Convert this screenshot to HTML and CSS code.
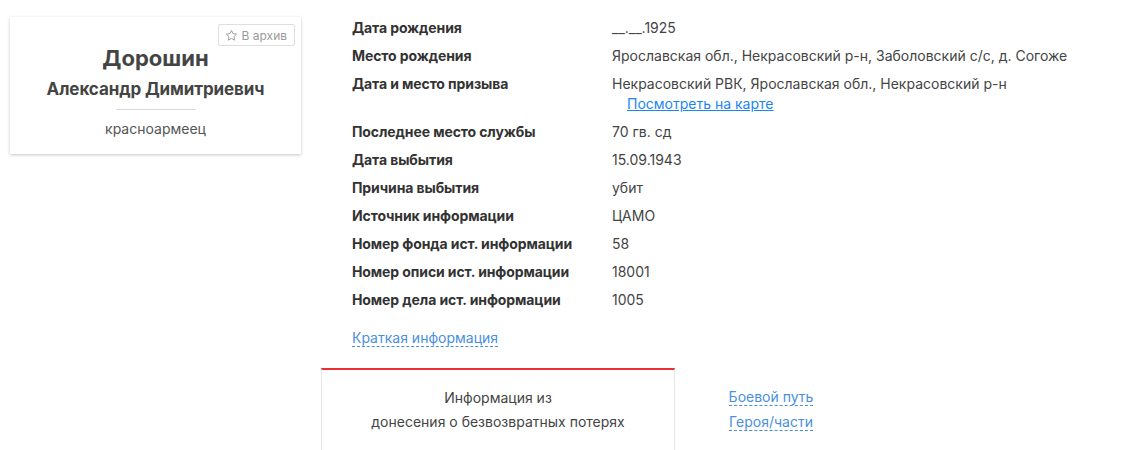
FILE: index.html
```html
<!DOCTYPE html>
<html lang="ru">
<head>
    <meta charset="UTF-8">
    <meta name="viewport" content="width=device-width, initial-scale=1.0">
    <title>Дорошин Александр Димитриевич</title>
    <link rel="stylesheet" href="styles.css">
</head>
<body>
    <div class="page">
        <!-- Person card -->
        <div class="hero-card">
            <button class="archive-btn">
                <svg class="star" width="13" height="13" viewBox="0 0 24 24">
                    <path d="M12 2.5l2.9 6.1 6.6.8-4.9 4.6 1.3 6.6L12 17.3l-5.9 3.3 1.3-6.6-4.9-4.6 6.6-.8z" fill="none" stroke="#9a9a9a" stroke-width="1.7" stroke-linejoin="round"/>
                </svg>
                В архив
            </button>
            <div class="hero-surname">Дорошин</div>
            <div class="hero-name">Александр Димитриевич</div>
            <div class="hero-divider"></div>
            <div class="hero-rank">красноармеец</div>
        </div>

        <!-- Details -->
        <div class="details">
            <div class="info-table">
                <div class="info-row">
                    <div class="info-label">Дата рождения</div>
                    <div class="info-value">__.__.1925</div>
                </div>
                <div class="info-row">
                    <div class="info-label">Место рождения</div>
                    <div class="info-value">Ярославская обл., Некрасовский р-н, Заболовский с/с, д. Согоже</div>
                </div>
                <div class="info-row">
                    <div class="info-label">Дата и место призыва</div>
                    <div class="info-value">
                        Некрасовский РВК, Ярославская обл., Некрасовский р-н
                        <a href="#" class="map-link">Посмотреть на карте</a>
                    </div>
                </div>
                <div class="info-row">
                    <div class="info-label">Последнее место службы</div>
                    <div class="info-value">70 гв. сд</div>
                </div>
                <div class="info-row">
                    <div class="info-label">Дата выбытия</div>
                    <div class="info-value">15.09.1943</div>
                </div>
                <div class="info-row">
                    <div class="info-label">Причина выбытия</div>
                    <div class="info-value">убит</div>
                </div>
                <div class="info-row">
                    <div class="info-label">Источник информации</div>
                    <div class="info-value">ЦАМО</div>
                </div>
                <div class="info-row">
                    <div class="info-label">Номер фонда ист. информации</div>
                    <div class="info-value">58</div>
                </div>
                <div class="info-row">
                    <div class="info-label">Номер описи ист. информации</div>
                    <div class="info-value">18001</div>
                </div>
                <div class="info-row">
                    <div class="info-label">Номер дела ист. информации</div>
                    <div class="info-value">1005</div>
                </div>
            </div>

            <div class="short-info">
                <a href="#" class="dashed-link">Краткая информация</a>
            </div>

            <div class="tabs">
                <div class="tab active">
                    Информация из<br>
                    донесения о безвозвратных потерях
                </div>
                <div class="tab-side">
                    <a href="#" class="dashed-link">Боевой путь<br>Героя/части</a>
                </div>
            </div>
        </div>
    </div>
</body>
</html>
```
FILE: styles.css
```css
* {
    margin: 0;
    padding: 0;
    box-sizing: border-box;
}

body {
    font-family: 'Inter', 'Noto Sans', sans-serif;
    font-size: 14px;
    color: #444;
    background: #fff;
}

.page {
    display: flex;
    align-items: flex-start;
    gap: 20px;
    padding: 14px 0 0 10px;
}

/* Person card */
.hero-card {
    width: 291px;
    margin-top: 3px;
    padding: 27px 10px 15px;
    background: #fff;
    box-shadow: 0 1px 3px rgba(0,0,0,0.22);
    text-align: center;
    position: relative;
}

.archive-btn {
    position: absolute;
    top: 7px;
    right: 6px;
    display: flex;
    align-items: center;
    gap: 4px;
    height: 22px;
    padding: 0 7px 0 6px;
    background: #fff;
    border: 1px solid #dedede;
    border-radius: 2px;
    font-family: inherit;
    font-size: 12px;
    color: #9a9a9a;
    cursor: pointer;
}

.hero-surname {
    font-size: 22px;
    font-weight: bold;
    color: #444;
    line-height: 28px;
}

.hero-name {
    margin-top: 5px;
    font-size: 17px;
    font-weight: bold;
    color: #444;
    line-height: 24px;
    letter-spacing: -0.1px;
}

.hero-divider {
    width: 80px;
    height: 1px;
    background: #dcdcdc;
    margin: 8px auto 9px;
}

.hero-rank {
    font-size: 14px;
    color: #555;
    line-height: 20px;
}

/* Details */
.details {
    width: 760px;
}

.info-table {
    padding-left: 31px;
}

.info-row {
    display: flex;
    padding: 4px 0;
    line-height: 20px;
}

.info-label {
    width: 260px;
    flex-shrink: 0;
    font-weight: bold;
    color: #333;
    letter-spacing: -0.1px;
}

.info-value {
    color: #444;
}

.map-link {
    display: block;
    margin-left: 15px;
    color: #1a86f5;
    text-decoration: underline;
}

.short-info {
    padding: 14px 0 0 31px;
    line-height: 20px;
}

.dashed-link {
    color: #4a8fdc;
    text-decoration: none;
    border-bottom: 1px dashed #4a8fdc;
}

/* Bottom tabs */
.tabs {
    display: flex;
    margin-top: 20px;
}

.tab {
    width: 354px;
    height: 90px;
    padding-top: 16px;
    border-top: 2px solid #ec2c36;
    border-left: 1px solid #e6e6e6;
    border-right: 1px solid #e6e6e6;
    text-align: center;
    line-height: 24px;
    color: #444;
}

.tab-side {
    width: 192px;
    padding-top: 16px;
    text-align: center;
    line-height: 25px;
}
```
